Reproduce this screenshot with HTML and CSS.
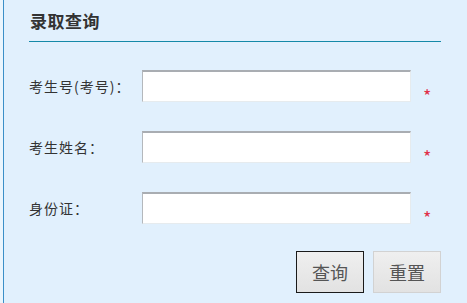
FILE: index.html
```html
<!DOCTYPE html>
<html lang="zh-CN">
<head>
    <meta charset="UTF-8">
    <meta name="viewport" content="width=device-width, initial-scale=1.0">
    <title>录取查询</title>
    <link rel="stylesheet" href="styles.css">
</head>
<body>
    <div class="panel">
        <h2 class="panel-title">录取查询</h2>
        <form class="query-form" onsubmit="return false">
            <div class="form-row">
                <label for="ksh">考生号(考号)：</label>
                <input type="text" id="ksh">
                <span class="required">*</span>
            </div>
            <div class="form-row">
                <label for="xm">考生姓名：</label>
                <input type="text" id="xm">
                <span class="required">*</span>
            </div>
            <div class="form-row">
                <label for="sfz">身份证：</label>
                <input type="text" id="sfz">
                <span class="required">*</span>
            </div>
            <div class="form-actions">
                <button type="submit" class="btn btn-primary">查询</button>
                <button type="reset" class="btn">重置</button>
            </div>
        </form>
    </div>
</body>
</html>
```

FILE: styles.css
```css
body {
    margin: 0;
    padding: 0;
    background-color: #eaf5fd;
    font-family: "Noto Sans CJK SC", "Liberation Sans", sans-serif;
    color: #333;
}
.panel {
    margin-left: 3px;
    border-left: 1px solid #3b8fc8;
    background-color: #e1f0fd;
    min-height: 303px;
    padding: 0 26px 0 25px;
    box-sizing: border-box;
}
.panel-title {
    margin: 0;
    padding: 11px 0 10px 1px;
    font-size: 17px;
    line-height: 20px;
    font-weight: bold;
    letter-spacing: 0.5px;
    color: #333;
    border-bottom: 1px solid #1589a8;
}
.query-form {
    padding-top: 28px;
}
.form-row {
    display: flex;
    align-items: center;
    height: 32px;
    margin-bottom: 29px;
}
.form-row label {
    width: 113px;
    font-size: 14px;
    letter-spacing: 1px;
    color: #333;
}
.form-row input {
    width: 269px;
    height: 32px;
    box-sizing: border-box;
    margin: 0;
    border: 1px solid #e6ebee;
    border-top: 2px solid #a9adb2;
    border-left: 1px solid #b4b8bc;
    background: #fff;
    outline: none;
}
.required {
    align-self: flex-end;
    margin-left: 12px;
    margin-bottom: -6px;
    font-size: 18px;
    color: #e0304a;
}
.form-actions {
    display: flex;
    justify-content: flex-end;
    gap: 9px;
    margin-top: -2px;
}
.btn {
    width: 68px;
    height: 42px;
    font-family: "Noto Sans CJK SC", sans-serif;
    font-size: 18px;
    color: #555;
    background: linear-gradient(#efefef, #e2e2e2);
    border: 1px solid #d2d2d2;
    padding: 0;
}
.btn-primary {
    border: 1px solid #1a1a1a;
}
```
